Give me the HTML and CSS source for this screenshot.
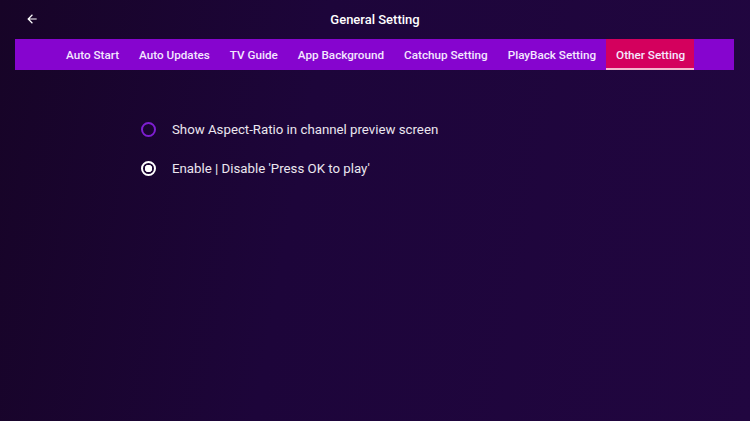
FILE: index.html
```html
<!DOCTYPE html>
<html lang="en">
<head>
    <meta charset="UTF-8">
    <meta name="viewport" content="width=device-width, initial-scale=1.0">
    <title>General Setting</title>
    <link rel="stylesheet" href="styles.css">
</head>
<body>
    <div id="pantalla">
        <div class="cabecera">
            <span class="volver">
                <svg width="14" height="14" viewBox="0 0 24 24"><path d="M20 11H7.83l5.59-5.59L12 4l-8 8 8 8 1.41-1.41L7.83 13H20v-2z" fill="#fff"/></svg>
            </span>
            <h1>General Setting</h1>
        </div>

        <!-- Pestañas -->
        <div class="pestanas">
            <span class="pestana">Auto Start</span>
            <span class="pestana">Auto Updates</span>
            <span class="pestana">TV Guide</span>
            <span class="pestana">App Background</span>
            <span class="pestana">Catchup Setting</span>
            <span class="pestana">PlayBack Setting</span>
            <span class="pestana activa">Other Setting</span>
        </div>

        <!-- Opciones -->
        <ul class="opciones">
            <li><span class="radio"></span>Show Aspect-Ratio in channel preview screen</li>
            <li><span class="radio marcado"></span>Enable | Disable 'Press OK to play'</li>
        </ul>
    </div>
</body>
</html>
```

FILE: styles.css
```css
body {
    margin: 0;
    padding: 0;
    font-family: Roboto, "Liberation Sans", sans-serif;
}
#pantalla {
    width: 750px;
    height: 421px;
    overflow: hidden;
    background: linear-gradient(100deg, #170427 0%, #1d053a 40%, #210640 100%);
}
.cabecera {
    position: relative;
    height: 39px;
    display: flex;
    align-items: center;
    justify-content: center;
}
.cabecera h1 {
    margin: 0;
    font-size: 13px;
    font-weight: 500;
    color: #fff;
}
.volver {
    position: absolute;
    left: 25px;
    top: 12px;
    line-height: 0;
}
.pestanas {
    margin: 0 16px 0 15px;
    height: 31px;
    background-color: #8605cf;
    display: flex;
    padding-left: 41px;
}
.pestana {
    padding: 0 9px 0 10px;
    margin-right: 1px;
    display: flex;
    align-items: center;
    font-size: 11.7px;
    font-weight: 500;
    color: #f4e8ff;
}
.pestana.activa {
    background-color: #d4005d;
    box-shadow: inset 0 -2px 0 #f2b8cc;
}
.opciones {
    list-style: none;
    margin: 0;
    padding: 49px 0 0 141px;
}
.opciones li {
    display: flex;
    align-items: center;
    height: 20px;
    margin-bottom: 19px;
    font-size: 13.25px;
    color: #ebe6ef;
}
.radio {
    width: 11px;
    height: 11px;
    border: 2px solid #7d1ed0;
    border-radius: 50%;
    margin-right: 16px;
    box-sizing: content-box;
}
.radio.marcado {
    border-color: #fff;
    background: radial-gradient(circle, #fff 0 3.5px, transparent 4px);
}
```
